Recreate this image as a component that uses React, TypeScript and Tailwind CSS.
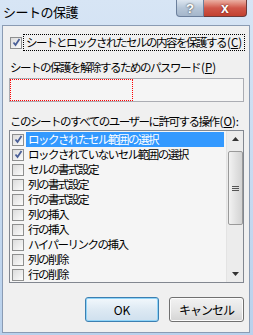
import { useState } from 'react';

interface Permission {
  id: string;
  label: string;
  checked: boolean;
}

const initialPermissions: Permission[] = [
  { id: 'sel-locked', label: 'ロックされたセル範囲の選択', checked: true },
  { id: 'sel-unlocked', label: 'ロックされていないセル範囲の選択', checked: true },
  { id: 'fmt-cells', label: 'セルの書式設定', checked: false },
  { id: 'fmt-cols', label: '列の書式設定', checked: false },
  { id: 'fmt-rows', label: '行の書式設定', checked: false },
  { id: 'ins-cols', label: '列の挿入', checked: false },
  { id: 'ins-rows', label: '行の挿入', checked: false },
  { id: 'ins-link', label: 'ハイパーリンクの挿入', checked: false },
  { id: 'del-cols', label: '列の削除', checked: false },
  { id: 'del-rows', label: '行の削除', checked: false },
];

const font = { fontFamily: '"Noto Sans CJK JP", "Noto Sans", sans-serif' };

function CheckBox({ checked }: { checked: boolean }) {
  return (
    <span className="flex h-[12px] w-[12px] shrink-0 items-center justify-center border border-[#8e8f8f] bg-gradient-to-br from-[#dcdcdc] to-[#fbfbfb]">
      {checked && (
        <svg width="9" height="9" viewBox="0 0 9 9">
          <path d="M1.5 4.5 L3.5 7 L7.5 1" fill="none" stroke="#4a5f97" strokeWidth="1.8" />
        </svg>
      )}
    </span>
  );
}

function Triangle({ up }: { up?: boolean }) {
  return (
    <svg width="7" height="4" viewBox="0 0 7 4">
      <path d={up ? 'M0 4 L3.5 0 L7 4 Z' : 'M0 0 L7 0 L3.5 4 Z'} fill="#333" />
    </svg>
  );
}

// アクセスキー付きラベル
function AccessLabel({ text, hotkey, tail = '' }: { text: string; hotkey: string; tail?: string }) {
  return (
    <>
      <span className="tracking-[-1.5px]">{text}</span>
      <span className="ml-[1px]">
        (<span className="underline">{hotkey}</span>){tail}
      </span>
    </>
  );
}

export default function App() {
  const [protect, setProtect] = useState(true);
  const [permissions, setPermissions] = useState(initialPermissions);
  const [selected, setSelected] = useState('sel-locked');

  const toggle = (id: string) => {
    setPermissions(permissions.map(p => (p.id === id ? { ...p, checked: !p.checked } : p)));
  };

  return (
    <div
      className="flex h-[335px] w-[253px] flex-col bg-gradient-to-b from-[#d7e5f5] to-[#b9d1ec] text-[11.5px] text-black"
      style={font}
    >
      {/* タイトルバー */}
      <div className="flex h-[25px] shrink-0 items-start">
        <span className="ml-[3px] mt-[3px] text-[13px] leading-[17px] tracking-[-0.5px]">シートの保護</span>
        <div className="ml-auto mr-[6px] flex">
          <div className="flex h-[17px] w-[28px] items-center justify-center rounded-bl-[4px] border border-t-0 border-[#6b7f9c] bg-gradient-to-b from-[#dde6f0] via-[#b6c6d8] to-[#a4b6cb]">
            <span className="text-[13px] font-bold leading-none text-white [text-shadow:0_0_2px_#222]" style={{ fontFamily: '"Liberation Sans", sans-serif' }}>
              ?
            </span>
          </div>
          <div className="flex h-[17px] w-[43px] items-center justify-center rounded-br-[4px] border border-l-0 border-t-0 border-[#6b3a3a] bg-gradient-to-b from-[#eab0a4] via-[#d0574a] to-[#c2412f]">
            <span className="text-[14px] font-bold leading-none text-white [text-shadow:0_0_2px_#4a1010]" style={{ fontFamily: '"Liberation Sans", sans-serif' }}>
              x
            </span>
          </div>
        </div>
      </div>

      {/* 本体 */}
      <div className="mb-[2px] ml-[2px] mr-[3px] flex flex-1 flex-col border border-[#8a9bb3] bg-[#f0f0f0] pl-[6px] pr-[5px]">
        <div className="mt-[8px] flex items-center" onClick={() => setProtect(!protect)}>
          <span className="ml-[1px] mr-[1px]">
            <CheckBox checked={protect} />
          </span>
          <span className="whitespace-nowrap border border-dotted border-black px-[2px] leading-[15px]">
            <AccessLabel text="シートとロックされたセルの内容を保護する" hotkey="C" />
          </span>
        </div>

        <div className="mt-[9px] ml-[1px] whitespace-nowrap leading-[14px]">
          <AccessLabel text="シートの保護を解除するためのパスワード" hotkey="P" />
        </div>

        <div className="mt-[4px] h-[24px] border border-[#abadb3] bg-[#f5f5f5]">
          <div className="h-full w-[123px] border border-dotted border-[#ff0000]" />
        </div>

        <div className="mt-[12px] ml-[1px] whitespace-nowrap leading-[14px]">
          <AccessLabel text="このシートのすべてのユーザーに許可する操作" hotkey="O" tail=":" />
        </div>

        <div className="mt-[2px] flex h-[153px] border border-[#828790] bg-[#f5f5f5]">
          <div className="flex flex-1 flex-col pt-[1px]">
            {permissions.map(p => (
              <div key={p.id} className="flex h-[15px] items-center" onClick={() => setSelected(p.id)}>
                <span className="ml-[2px]" onClick={() => toggle(p.id)}>
                  <CheckBox checked={p.checked} />
                </span>
                <span
                  className={`ml-[2px] mr-[2px] flex h-[15px] flex-1 items-center whitespace-nowrap pl-[2px] leading-[15px] tracking-[-1.5px] ${
                    selected === p.id ? 'bg-[#3399ff] text-white' : ''
                  }`}
                >
                  {p.label}
                </span>
              </div>
            ))}
          </div>

          {/* スクロールバー */}
          <div className="flex w-[17px] flex-col items-center border-l border-[#e3e3e3] bg-[#ececec]">
            <div className="flex h-[16px] items-center">
              <Triangle up />
            </div>
            <div className="mt-[4px] flex h-[74px] w-[15px] items-center justify-center rounded-[2px] border border-[#9a9a9a] bg-gradient-to-r from-[#f2f2f2] via-[#e2e2e2] to-[#d3d3d3]">
              <div className="flex flex-col gap-[1px]">
                <div className="h-[1px] w-[7px] bg-[#555]" />
                <div className="h-[1px] w-[7px] bg-[#555]" />
                <div className="h-[1px] w-[7px] bg-[#555]" />
              </div>
            </div>
            <div className="mt-auto flex h-[16px] items-center">
              <Triangle />
            </div>
          </div>
        </div>

        <div className="mt-[14px] flex justify-end gap-[10px] text-[12px]">
          <button className="h-[25px] w-[74px] rounded-[3px] border border-[#3c7fb1] bg-gradient-to-b from-[#f2f8fc] via-[#dde9f3] to-[#cfe0ee] shadow-[inset_0_0_0_1px_#8fd4f8]">
            OK
          </button>
          <button className="h-[25px] w-[75px] rounded-[3px] border border-[#707070] bg-gradient-to-b from-[#f2f2f2] via-[#e6e6e6] to-[#d4d4d4] shadow-[inset_0_0_0_1px_#fbfbfb] tracking-[-1px]">
            キャンセル
          </button>
        </div>
      </div>
    </div>
  );
}
